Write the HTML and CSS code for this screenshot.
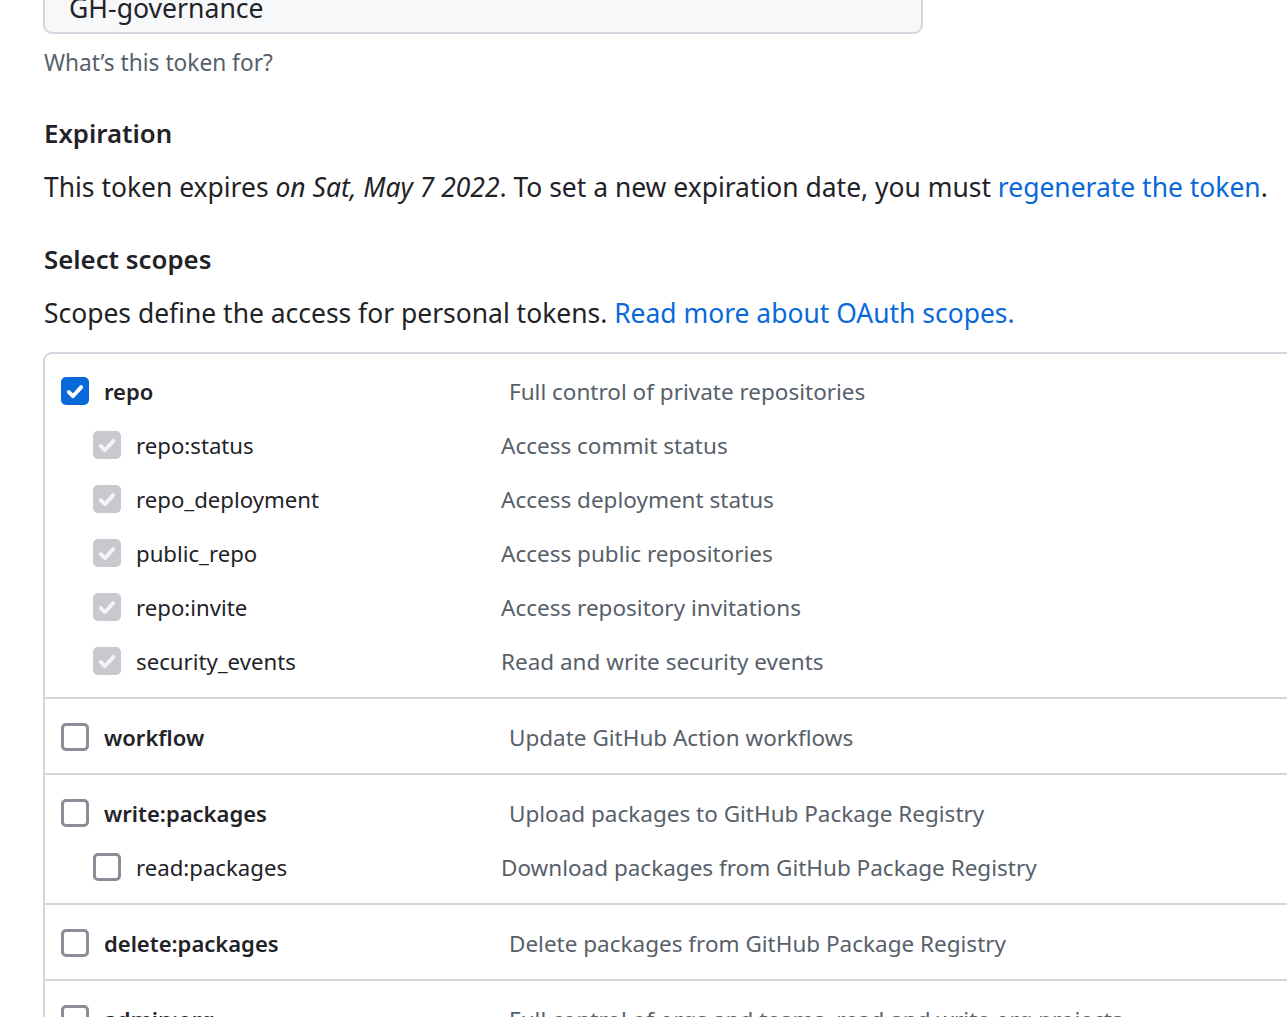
FILE: index.html
```html
<!DOCTYPE html>
<html lang="en">
<head>
<meta charset="utf-8">
<title>New personal access token</title>
<link rel="stylesheet" href="styles.css">
</head>
<body>
<main class="page">
  <div class="field">
    <div class="input">GH-governance</div>
  </div>
  <p class="note">What’s this token for?</p>

  <h3 class="heading">Expiration</h3>
  <p class="lead">This token expires <em>on Sat, May 7 2022</em>. To set a new expiration date, you must <a href="#" class="link">regenerate the token</a>.</p>

  <h3 class="heading heading-2">Select scopes</h3>
  <p class="lead">Scopes define the access for personal tokens. <a href="#" class="link">Read more about OAuth scopes.</a></p>

  <div class="scopes">
    <section class="group">
      <div class="row">
        <span class="box checked"><svg viewBox="0 0 16 16"><path d="M3.5 8.4l3 3 6-6.6"/></svg></span>
        <span class="name">repo</span>
        <span class="desc">Full control of private repositories</span>
      </div>
      <div class="row sub">
        <span class="box disabled"><svg viewBox="0 0 16 16"><path d="M3.5 8.4l3 3 6-6.6"/></svg></span>
        <span class="name">repo:status</span>
        <span class="desc">Access commit status</span>
      </div>
      <div class="row sub">
        <span class="box disabled"><svg viewBox="0 0 16 16"><path d="M3.5 8.4l3 3 6-6.6"/></svg></span>
        <span class="name">repo_deployment</span>
        <span class="desc">Access deployment status</span>
      </div>
      <div class="row sub">
        <span class="box disabled"><svg viewBox="0 0 16 16"><path d="M3.5 8.4l3 3 6-6.6"/></svg></span>
        <span class="name">public_repo</span>
        <span class="desc">Access public repositories</span>
      </div>
      <div class="row sub">
        <span class="box disabled"><svg viewBox="0 0 16 16"><path d="M3.5 8.4l3 3 6-6.6"/></svg></span>
        <span class="name">repo:invite</span>
        <span class="desc">Access repository invitations</span>
      </div>
      <div class="row sub">
        <span class="box disabled"><svg viewBox="0 0 16 16"><path d="M3.5 8.4l3 3 6-6.6"/></svg></span>
        <span class="name">security_events</span>
        <span class="desc">Read and write security events</span>
      </div>
    </section>
    <section class="group">
      <div class="row">
        <span class="box"></span>
        <span class="name">workflow</span>
        <span class="desc">Update GitHub Action workflows</span>
      </div>
    </section>
    <section class="group">
      <div class="row">
        <span class="box"></span>
        <span class="name">write:packages</span>
        <span class="desc">Upload packages to GitHub Package Registry</span>
      </div>
      <div class="row sub">
        <span class="box"></span>
        <span class="name">read:packages</span>
        <span class="desc">Download packages from GitHub Package Registry</span>
      </div>
    </section>
    <section class="group">
      <div class="row">
        <span class="box"></span>
        <span class="name">delete:packages</span>
        <span class="desc">Delete packages from GitHub Package Registry</span>
      </div>
    </section>
    <section class="group">
      <div class="row">
        <span class="box"></span>
        <span class="name">admin:org</span>
        <span class="desc">Full control of orgs and teams, read and write org projects</span>
      </div>
    </section>
  </div>
</main>
</body>
</html>
```
FILE: styles.css
```css
* { box-sizing: border-box; }
html, body { margin: 0; padding: 0; background: #ffffff; }
body {
  font-family: "Noto Sans", "Open Sans", "Liberation Sans", sans-serif;
  color: #1f2328;
  overflow: hidden;
  height: 1017px;
}
.page { padding-left: 43px; }

.field { margin-top: -16px; width: 880px; }
.input {
  height: 50px;
  background: #f6f8fa;
  border: 2px solid #d0d7de;
  border-radius: 9px;
  padding: 0 24px;
  font-size: 26.6px;
  line-height: 44px;
  color: #1f2328;
  white-space: nowrap;
}

.note {
  margin: 14px 0 0 1px;
  font-size: 22.7px;
  line-height: 30px;
  color: #57606a;
}

.heading {
  margin: 37px 0 0 1px;
  font-size: 25.8px;
  line-height: 36px;
  font-weight: 600;
}
.heading-2 { margin-top: 36px; }

.lead {
  margin: 18px 0 0 1px;
  font-size: 26.45px;
  line-height: 36px;
  white-space: nowrap;
}
.link { color: #0969da; text-decoration: none; }

.scopes {
  margin-top: 21px;
  border: 2px solid #d0d7de;
  border-right: 0;
  border-radius: 9px 0 0 9px;
  width: 1300px;
}
.group {
  padding: 11px 0 9px 16px;
  border-top: 2px solid #d0d7de;
}
.group:first-child { border-top: 0; padding-top: 10px; }

.row {
  display: flex;
  align-items: center;
  height: 54px;
  font-size: 22.5px;
}
.row.sub { padding-left: 32px; }

.box {
  flex: none;
  width: 28px;
  height: 28px;
  border: 3px solid #8c8c98;
  border-radius: 5px;
  display: flex;
  align-items: center;
  justify-content: center;
}
.box svg { width: 25px; height: 25px; fill: none; stroke: #fff; stroke-width: 2.8; stroke-linecap: round; stroke-linejoin: round; }
.box.checked { background: #0969da; border-color: #0969da; }
.box.disabled { background: #c8c9cf; border-color: #c8c9cf; }
.box.disabled svg { stroke: #f4f4f6; }

.name {
  flex: none;
  width: 420px;
  padding-left: 15px;
  font-size: 22px;
  font-weight: 600;
  color: #1f2328;
}
.sub .name { width: 380px; font-weight: 400; font-size: 22.2px; }

.desc { color: #57606a; white-space: nowrap; }
```
